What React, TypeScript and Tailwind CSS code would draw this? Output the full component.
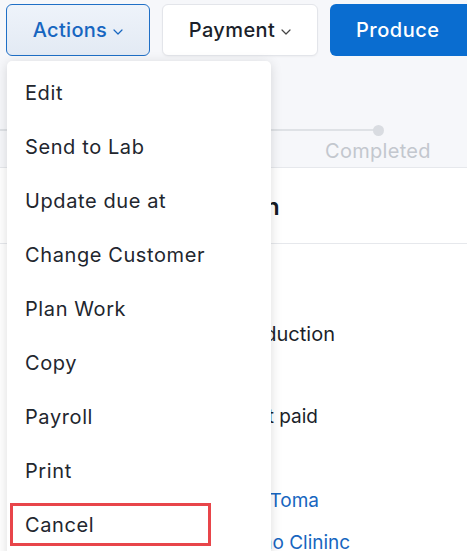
import React from "react";

const Chevron = ({ className }: { className?: string }) => (
  <svg width="10" height="6" viewBox="0 0 10 6" className={className} fill="none">
    <path d="M1 1l4 4 4-4" stroke="currentColor" strokeWidth="1.2" strokeLinecap="round" strokeLinejoin="round" />
  </svg>
);

const items = ["Edit", "Send to Lab", "Update due at", "Change Customer", "Plan Work", "Copy", "Payroll", "Print", "Cancel"];

export default function App() {
  return (
    <div className="relative w-[467px] h-[551px] overflow-hidden bg-white" style={{ fontFamily: "Inter, 'Noto Sans', sans-serif" }}>
      {/* header area */}
      <div className="bg-[#f6f7fa] h-[168px] border-b border-[#e6e8ec] flex flex-col">
        <div className="flex pt-[4px] pl-[6px] gap-[12px] w-[500px]">
          <button className="w-[144px] h-[52px] rounded-[6px] border border-[#1f6fc6] bg-gradient-to-b from-[#eef3fa] to-[#e3eaf4] text-[#1766c0] text-[20px] font-medium tracking-[0.3px] flex items-center justify-center gap-[6px]">
            Actions <Chevron className="mt-[3px]" />
          </button>
          <button className="w-[156px] h-[52px] rounded-[6px] border border-[#e3e5ea] bg-white text-[#1b1f2a] text-[20px] font-medium tracking-[0.4px] flex items-center justify-center gap-[6px] shadow-[0_1px_2px_rgba(0,0,0,0.04)]">
            Payment <Chevron className="mt-[3px] text-[#444]" />
          </button>
          <button className="w-[150px] h-[52px] rounded-[6px] bg-[#0a6dd0] text-white text-[20px] font-medium tracking-[0.5px] flex items-center justify-start pl-[26px]">
            Produce
          </button>
        </div>
        <div className="relative mt-auto h-[60px]">
          <div className="absolute left-[0px] top-[22px] w-[378px] h-[2px] bg-[#dfe2e6]" />
          <div className="absolute left-[373px] top-[18px] w-[11px] h-[11px] rounded-full bg-[#d9dce1]" />
          <div className="absolute left-[325px] top-[32px] text-[20px] tracking-[0.3px] text-[#c3c7ce] leading-[24px]">Completed</div>
        </div>
      </div>
      {/* content card */}
      <div className="flex flex-col">
        <div className="h-[76px] border-b border-[#e6e8ec] flex items-center pl-[81px] pt-[2px] text-[24px] font-semibold text-[#161a23]">
          Case Information
        </div>
        <div className="flex flex-col text-[19px] text-[#1b1f2a] pl-[221px]">
          <div className="h-[57px]" />
          <div className="h-[64px] flex items-center pt-[2px] -ml-[11px] text-[20px]">In production</div>
          <div className="h-[20px]" />
          <div className="h-[64px] flex items-center pl-[21px]">Not paid</div>
          <div className="h-[20px]" />
          <div className="h-[64px] flex items-center text-[#1766c0] pl-[18px]">Dr. Toma</div>
          <div className="h-[20px] flex items-center text-[#1766c0] pl-[10px] whitespace-nowrap">Demo Clininc</div>
        </div>
      </div>
      {/* dropdown menu */}
      <div className="absolute left-[7px] top-[61px] w-[264px] h-[510px] bg-white rounded-[5px] shadow-[0_2px_12px_rgba(0,0,0,0.14)] pt-[5px]">
        {items.map((it) => (
          <div key={it} className="h-[54px] flex items-center pl-[18px] text-[20px] text-[#22262e] tracking-[0.6px]">
            {it}
          </div>
        ))}
      </div>
      {/* annotation box */}
      <div className="absolute left-[10px] top-[503px] w-[201px] h-[43px] border-[3px] border-[#e8454a]" />
    </div>
  );
}
